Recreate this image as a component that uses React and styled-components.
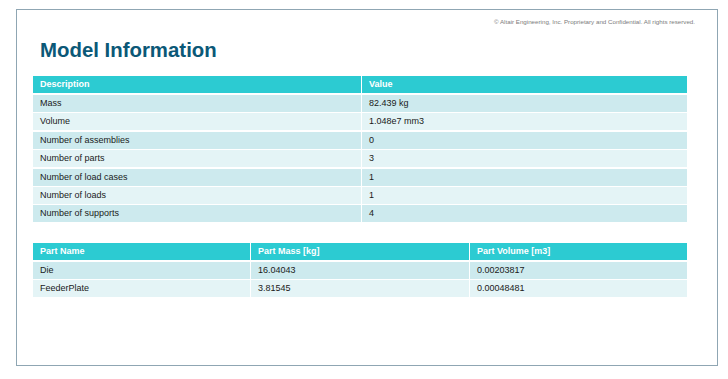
import React from 'react'
import styled, { createGlobalStyle } from 'styled-components'

const GlobalStyle = createGlobalStyle`
  body {
    margin: 0;
    background: #ffffff;
    font-family: "Liberation Sans", Arial, sans-serif;
  }
`

const Slide = styled.section`
  box-sizing: border-box;
  width: 702px;
  height: 357px;
  margin: 9px 0 0 16px;
  padding: 8px 30px 0 16px;
  border: 1px solid #8fa6b3;
  background: #ffffff;
`

const Copyright = styled.div`
  margin-right: -8px;
  text-align: right;
  font-size: 6.2px;
  line-height: 8px;
  color: #7c7c7c;
`

const Title = styled.h1`
  margin: 12px 0 14px 7px;
  font-size: 20.4px;
  line-height: 24px;
  font-weight: bold;
  color: #0b5877;
`

const Table = styled.div`
  display: grid;
  grid-template-columns: ${props => props.columns};
  margin-bottom: ${props => props.gapBelow || 0}px;
`

const HeaderCell = styled.div`
  height: 17px;
  margin-bottom: 2px;
  padding-left: 7px;
  border-left: ${props => (props.first ? 'none' : '1px solid #ffffff')};
  background: #2ccbd2;
  color: #ffffff;
  font-size: 9px;
  font-weight: bold;
  line-height: 17px;
`

const Cell = styled.div`
  height: 17px;
  margin-bottom: 1.4px;
  padding-left: 7px;
  border-left: ${props => (props.first ? 'none' : '1px solid #ffffff')};
  background: ${props => (props.odd ? '#cdeaee' : '#e4f4f6')};
  color: #1a1a1a;
  font-size: 9px;
  line-height: 17px;
  white-space: nowrap;
`

const modelRows = [
  ['Mass', '82.439 kg'],
  ['Volume', '1.048e7 mm3'],
  ['Number of assemblies', '0'],
  ['Number of parts', '3'],
  ['Number of load cases', '1'],
  ['Number of loads', '1'],
  ['Number of supports', '4'],
]

const partRows = [
  ['Die', '16.04043', '0.00203817'],
  ['FeederPlate', '3.81545', '0.00048481'],
]

function DataTable({ headers, rows, columns, gapBelow }) {
  return (
    <Table columns={columns} gapBelow={gapBelow}>
      {headers.map((h, i) => (
        <HeaderCell key={h} first={i === 0}>
          {h}
        </HeaderCell>
      ))}
      {rows.map((row, r) =>
        row.map((value, i) => (
          <Cell key={r + '-' + i} first={i === 0} odd={r % 2 === 0}>
            {value}
          </Cell>
        ))
      )}
    </Table>
  )
}

export default function App() {
  return (
    <>
      <GlobalStyle />
      <Slide>
        <Copyright>
          © Altair Engineering, Inc. Proprietary and Confidential. All rights reserved.
        </Copyright>
        <Title>Model Information</Title>
        <DataTable
          headers={['Description', 'Value']}
          rows={modelRows}
          columns="328px 326px"
          gapBelow={19}
        />
        <DataTable
          headers={['Part Name', 'Part Mass [kg]', 'Part Volume [m3]']}
          rows={partRows}
          columns="217px 219px 218px"
        />
      </Slide>
    </>
  )
}
